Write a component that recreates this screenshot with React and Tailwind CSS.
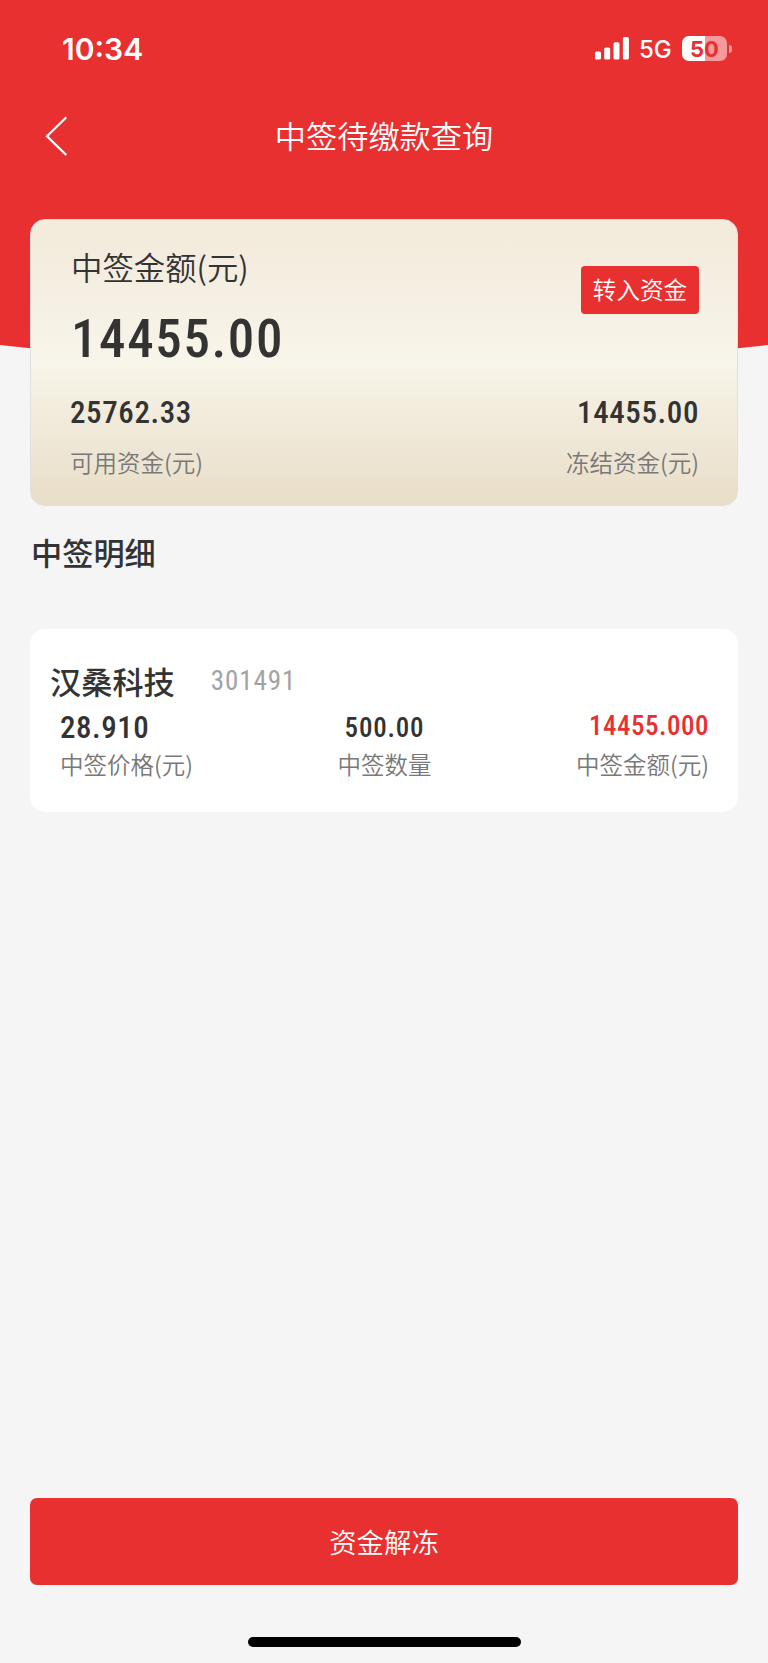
import clsx from 'clsx';

const summary = {
  total: '14455.00',
  available: '25762.33',
  frozen: '14455.00',
};

const stock = {
  name: '汉桑科技',
  code: '301491',
  price: '28.910',
  quantity: '500.00',
  amount: '14455.000',
};

const Num = ({ className, children }) => (
  <span className={clsx("block whitespace-nowrap font-['Roboto',sans-serif] [font-stretch:85%]", className)}>
    {children}
  </span>
);

const Label = ({ className, children }) => (
  <span className={clsx('block whitespace-nowrap text-[23.5px] font-[350] leading-8 text-[#787878]', className)}>
    {children}
  </span>
);

const StatusBar = () => (
  <div className="flex h-[98px] items-start justify-between pl-[62px] pr-9 pt-[31px] font-['Inter',sans-serif] text-white">
    <span className="text-[30px] font-semibold leading-9">10:34</span>
    <div className="flex items-center pt-1">
      <svg width="34" height="23" viewBox="0 0 34 23" fill="currentColor">
        <rect x="0" y="14.5" width="6" height="8" rx="1.6" />
        <rect x="9.2" y="10.5" width="6" height="12" rx="1.6" />
        <rect x="18.5" y="5.3" width="6" height="17.2" rx="1.6" />
        <rect x="27.9" y="0" width="6" height="22.5" rx="1.6" />
      </svg>
      <span className="ml-[10px] mt-[2px] w-[33px] text-[24px] font-[450] leading-[25px]">5G</span>
      <div className="ml-[10px] flex items-center">
        <div className="flex h-[25px] w-[45px] items-center justify-center rounded-[7px] bg-[linear-gradient(90deg,#fff_51%,#f69a9b_51%)] text-[22px] font-bold leading-none text-[#e93030]">
          50
        </div>
        <div className="ml-0.5 h-2 w-[3px] rounded-r-full bg-[#f69a9b]"></div>
      </div>
    </div>
  </div>
);

export default function App() {
  return (
    <div className="relative flex h-[1663px] w-[768px] flex-col overflow-hidden bg-[#f5f5f5] font-['Noto_Sans_CJK_SC',sans-serif] text-[#333]">
      {/* Curved header background */}
      <svg className="absolute left-0 top-0" width="768" height="390" viewBox="0 0 768 390">
        <path d="M0 0H768V345Q384 390 0 345Z" fill="#e93030" />
      </svg>

      <div className="relative flex flex-1 flex-col">
        <StatusBar />

        {/* Navigation */}
        <header className="flex h-[75px] items-center px-[45px] text-white">
          <svg width="23" height="40" viewBox="0 0 23 40" fill="none" stroke="currentColor" strokeWidth="2.3">
            <path d="M21.3 1.3L2 20.3L21.3 39" />
          </svg>
          <h1 className="-mt-0.5 flex-1 pr-[23px] text-center text-[31.2px] font-[350] leading-10">中签待缴款查询</h1>
        </header>

        {/* Amount summary */}
        <section className="mx-[30px] mt-[46px] h-[287px] rounded-[15px] border border-[#e2e0dc] bg-[linear-gradient(180deg,#f3ebdb_0%,#f4ede0_17%,#f8f5ea_50%,#f4eee0_63%,#e8dec8_100%)] pl-[39px] pr-[38px]">
          <div className="flex h-[160px] justify-between">
            <div>
              <h2 className="mt-[27px] pl-px text-[31.4px] font-[350] leading-10">中签金额(元)</h2>
              <Num className="mt-[22px] pl-px text-[53px] font-medium leading-[60px] tracking-[1.6px]">{summary.total}</Num>
            </div>
            <button className="mt-[46px] h-[48px] w-[118px] rounded bg-[#e93030] pb-[3px] text-[23.6px] font-[350] leading-8 text-white">
              转入资金
            </button>
          </div>
          <div className="flex justify-between pt-[13px]">
            <div>
              <Num className="text-[31px] font-medium leading-10 tracking-[0.6px]">{summary.available}</Num>
              <Label className="mt-[13px]">可用资金(元)</Label>
            </div>
            <div className="text-right">
              <Num className="text-[31px] font-medium leading-10 tracking-[0.6px]">{summary.frozen}</Num>
              <Label className="mt-[13px]">冻结资金(元)</Label>
            </div>
          </div>
        </section>

        <h2 className="ml-[31px] mt-[26px] text-[31.2px] font-medium leading-10">中签明细</h2>

        {/* Allotment details */}
        <section className="mx-[30px] mt-[57px] h-[183px] rounded-[15px] bg-white pl-[30px] pr-[29px] pt-8">
          <div className="-ml-[10px] flex items-center">
            <span className="text-[31.2px] font-medium leading-10">{stock.name}</span>
            <Num className="ml-9 text-[27px] font-[450] leading-9 tracking-[0.9px] text-[#a3a3a3]">{stock.code}</Num>
          </div>
          <div className="flex justify-between">
            <div>
              <Num className="h-[47px] text-[31px] font-medium leading-[53px] tracking-[0.5px]">{stock.price}</Num>
              <Label>中签价格(元)</Label>
            </div>
            <div className="text-center">
              <Num className="h-[47px] text-[27px] font-medium leading-[55px] tracking-[0.8px]">{stock.quantity}</Num>
              <Label>中签数量</Label>
            </div>
            <div className="text-right">
              <Num className="h-[47px] text-[27px] font-medium leading-[51px] tracking-[0.5px] text-[#e93030]">{stock.amount}</Num>
              <Label>中签金额(元)</Label>
            </div>
          </div>
        </section>

        <footer className="mt-auto px-[30px] pb-4">
          <button className="h-[87px] w-full rounded-[7px] bg-[#e93030] text-[27.4px] font-[350] text-white">资金解冻</button>
          <div className="mx-auto mt-[52px] h-[10px] w-[273px] rounded-full bg-black"></div>
        </footer>
      </div>
    </div>
  );
}
